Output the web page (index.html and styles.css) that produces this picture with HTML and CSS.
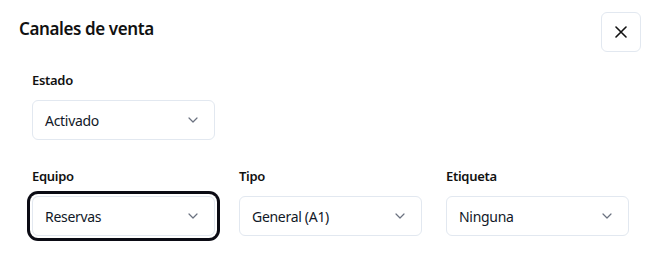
FILE: index.html
```html
<!DOCTYPE html>
<html lang="es">
<head>
    <meta charset="UTF-8">
    <meta name="viewport" content="width=device-width, initial-scale=1.0">
    <title>Canales de venta</title>
    <link rel="stylesheet" href="styles.css">
</head>
<body>
    <div class="dialog">
        <div class="dialog-header">
            <h2 class="dialog-title">Canales de venta</h2>
            <button class="close-button" aria-label="Cerrar">
                <svg width="12" height="12" viewBox="0 0 12 12"><path d="M1 1L11 11M11 1L1 11" stroke="#111" stroke-width="1.6" stroke-linecap="round"/></svg>
            </button>
        </div>

        <div class="dialog-body">
            <!-- Estado -->
            <div class="field-row">
                <div class="field">
                    <label class="field-label">Estado</label>
                    <button class="select">
                        <span>Activado</span>
                        <svg class="chevron" width="10" height="6" viewBox="0 0 10 6"><path d="M1 1L5 5L9 1" fill="none" stroke="#6b7280" stroke-width="1.2" stroke-linecap="round" stroke-linejoin="round"/></svg>
                    </button>
                </div>
            </div>

            <!-- Equipo / Tipo / Etiqueta -->
            <div class="field-row">
                <div class="field">
                    <label class="field-label">Equipo</label>
                    <button class="select focused">
                        <span>Reservas</span>
                        <svg class="chevron" width="10" height="6" viewBox="0 0 10 6"><path d="M1 1L5 5L9 1" fill="none" stroke="#6b7280" stroke-width="1.2" stroke-linecap="round" stroke-linejoin="round"/></svg>
                    </button>
                </div>
                <div class="field">
                    <label class="field-label">Tipo</label>
                    <button class="select">
                        <span>General (A1)</span>
                        <svg class="chevron" width="10" height="6" viewBox="0 0 10 6"><path d="M1 1L5 5L9 1" fill="none" stroke="#6b7280" stroke-width="1.2" stroke-linecap="round" stroke-linejoin="round"/></svg>
                    </button>
                </div>
                <div class="field">
                    <label class="field-label">Etiqueta</label>
                    <button class="select">
                        <span>Ninguna</span>
                        <svg class="chevron" width="10" height="6" viewBox="0 0 10 6"><path d="M1 1L5 5L9 1" fill="none" stroke="#6b7280" stroke-width="1.2" stroke-linecap="round" stroke-linejoin="round"/></svg>
                    </button>
                </div>
            </div>
        </div>
    </div>
</body>
</html>
```

FILE: styles.css
```css
body {
    margin: 0;
    font-family: "Noto Sans", "Open Sans", sans-serif;
    background-color: #ffffff;
    color: #111111;
}
.dialog {
    padding: 12px 12px 0 0;
}
.dialog-header {
    display: flex;
    justify-content: space-between;
    align-items: flex-start;
    padding-left: 19px;
}
.dialog-title {
    margin: 5px 0 0;
    font-size: 17px;
    line-height: 24px;
    font-weight: 600;
    letter-spacing: -0.4px;
}
.close-button {
    width: 40px;
    height: 40px;
    display: flex;
    align-items: center;
    justify-content: center;
    padding: 0;
    background: #ffffff;
    border: 1px solid #e2e8f0;
    border-radius: 6px;
    cursor: pointer;
}
.dialog-body {
    padding: 18px 12px 0 32px;
}
.field-row {
    display: grid;
    grid-template-columns: repeat(3, 1fr);
    gap: 24px;
    margin-bottom: 26px;
}
.field {
    display: flex;
    flex-direction: column;
}
.field-label {
    font-size: 13px;
    line-height: 20px;
    font-weight: 600;
    letter-spacing: -0.3px;
    margin-bottom: 10px;
}
.select {
    height: 40px;
    display: flex;
    align-items: center;
    justify-content: space-between;
    padding: 0 16px 0 12px;
    font-family: inherit;
    font-size: 14px;
    letter-spacing: -0.3px;
    color: #111827;
    background: #ffffff;
    border: 1px solid #e2e8f0;
    border-radius: 6px;
    cursor: pointer;
    text-align: left;
}
/* focus ring on the active select */
.select.focused {
    box-shadow: 0 0 0 2px #ffffff, 0 0 0 5px #0b0b14;
}
.chevron {
    flex-shrink: 0;
}
```
